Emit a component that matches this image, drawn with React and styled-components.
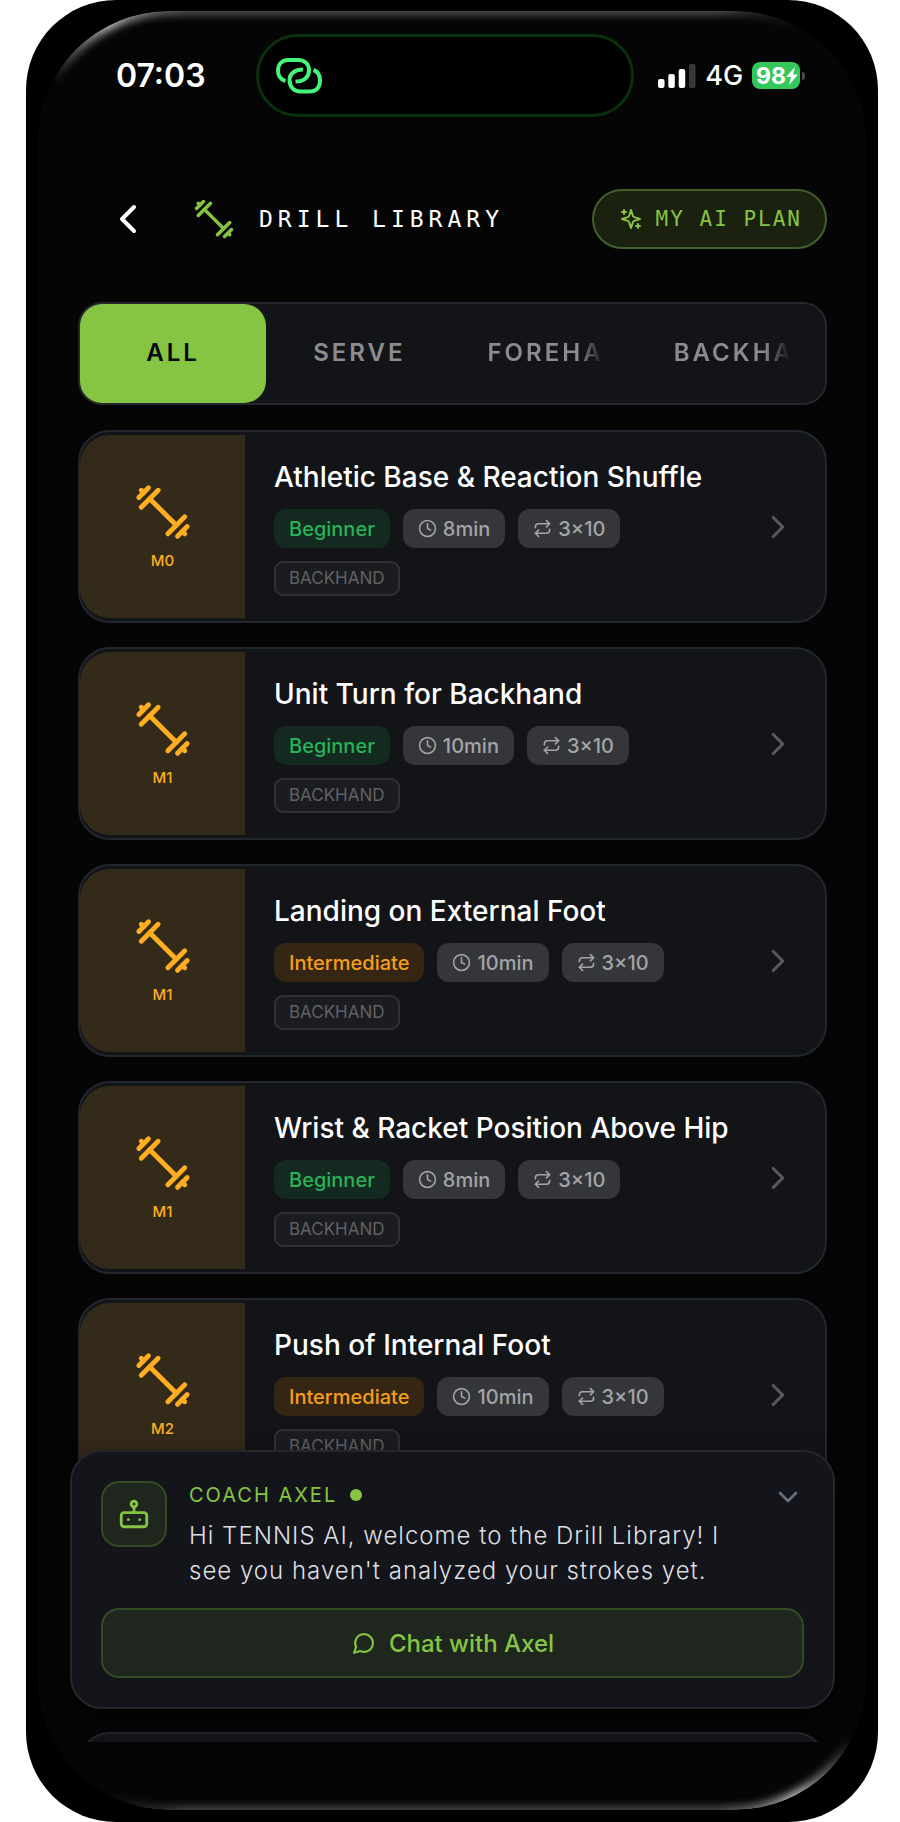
import React, { useState } from 'react';
import styled, { createGlobalStyle, css } from 'styled-components';

const GlobalStyle = createGlobalStyle`
  *, *:before, *:after {
    box-sizing: border-box;
  }

  body {
    background: #fff;
    font-family: Inter, "Liberation Sans", sans-serif;
    margin: 0;
  }

  button {
    background: none;
    border: 0;
    color: inherit;
    cursor: pointer;
    font: inherit;
    padding: 0;
  }

  h1, h2, p, ul {
    margin: 0;
    padding: 0;
  }
`;

const Phone = styled.div`
  background: #000;
  border-radius: 90px;
  height: 100vh;
  margin: 0 22px 0 26px;
  min-height: 900px;
  overflow: hidden;
  padding: 11px 12px 12px;
`;

const Screen = styled.div`
  background: #050505;
  border-radius: 130px;
  display: flex;
  flex-direction: column;
  height: 100%;
  overflow: hidden;
  padding: 23px 39px 68px 40px;
  position: relative;
`;

/* light that runs along the bezel */
const Glare = styled.div`
  border-radius: inherit;
  box-shadow: inset 0 5px 8px -1px rgba(255, 255, 255, .3), inset 0 -5px 8px -1px rgba(255, 255, 255, .26);
  inset: 0;
  mask-image: linear-gradient(to right, transparent 70px, #000 150px, #000 calc(100% - 150px), transparent calc(100% - 70px));
  pointer-events: none;
  position: absolute;
`;

const CornerGlare = styled.div`
  border-radius: inherit;
  box-shadow: ${props => (props.$bottom
    ? 'inset -3px -4px 8px 0 rgba(255, 255, 255, .7)'
    : 'inset 3px 4px 8px 0 rgba(255, 255, 255, .7)')};
  inset: 0;
  mask-image: radial-gradient(circle 80px at ${props => (props.$bottom
    ? 'calc(100% - 72px) calc(100% - 15px)'
    : '72px 15px')}, #000, transparent);
  pointer-events: none;
  position: absolute;
`;

const StatusBar = styled.div`
  align-items: center;
  color: #fff;
  display: grid;
  grid-template-columns: 140px 1fr auto;
  margin: 0 22px 0 38px;
`;

const Time = styled.span`
  font-size: 32px;
  font-weight: 600;
`;

const Island = styled.div`
  align-items: center;
  background: #000;
  border: 3px solid #0a300c;
  border-radius: 42px;
  display: flex;
  height: 83px;
  margin-right: 24px;
  padding-left: 17px;
`;

const Signals = styled.div`
  align-items: center;
  display: flex;
  font-size: 27px;
  font-weight: 500;
  gap: 9px;
`;

const Battery = styled.span`
  align-items: center;
  background: #34c759;
  border-radius: 8px;
  display: flex;
  font-size: 23px;
  font-weight: 700;
  height: 27px;
  margin-right: 5px;
  padding: 0 2px 0 4px;
  position: relative;

  &:after {
    background: #48484a;
    border-radius: 0 3px 3px 0;
    content: '';
    height: 8px;
    position: absolute;
    right: -5px;
    width: 3px;
  }
`;

const Header = styled.header`
  align-items: center;
  color: #86c543;
  display: flex;
  margin-top: 72px;
  padding-left: 26px;
`;

const BackButton = styled.button`
  color: #fff;
  display: flex;
  margin-right: 41px;
`;

const PageTitle = styled.h1`
  color: #fff;
  flex: 1;
  font-family: "DejaVu Sans Mono", "Liberation Mono", monospace;
  font-size: 23px;
  font-weight: 400;
  letter-spacing: 5px;
  margin-left: 24px;
  white-space: nowrap;
`;

const PlanButton = styled.button`
  align-items: center;
  background: #1a210f;
  border: 2px solid #42602a;
  border-radius: 30px;
  color: #86c543;
  display: flex;
  font-family: "DejaVu Sans Mono", "Liberation Mono", monospace;
  font-size: 21px;
  gap: 13px;
  height: 60px;
  letter-spacing: 2px;
  padding: 0 23px 0 25px;
  white-space: nowrap;
`;

const Tabs = styled.div`
  background: #131418;
  border: 2px solid #24272e;
  border-radius: 24px;
  display: grid;
  grid-template-columns: repeat(4, 1fr);
  margin-top: 53px;
`;

const Tab = styled.button`
  border-radius: 22px;
  color: #8b8c90;
  font-size: 24px;
  font-weight: 600;
  height: 99px;
  letter-spacing: 3px;
  min-width: 0;
  padding: 0 35px 2px;

  span {
    display: block;
    overflow: hidden;
    white-space: nowrap;
  }

  ${props => props.$active && css`
    background: #86c543;
    color: #050505;
  `}

  ${props => props.$faded && css`
    span {
      mask-image: linear-gradient(to right, #000 calc(100% - 26px), transparent);
    }
  `}
`;

const Content = styled.main`
  display: flex;
  flex: 1;
  flex-direction: column;
  margin-top: 25px;
  min-height: 0;
  position: relative;
`;

const DrillList = styled.ul`
  display: flex;
  flex: 1;
  flex-direction: column;
  gap: 24px;
  list-style: none;
  min-height: 0;
  overflow: hidden;
`;

const Card = styled.li`
  background: #131418;
  border: 2px solid #22262d;
  border-radius: 32px;
  flex-shrink: 0;
  min-height: 193px;
`;

const CardButton = styled.button`
  align-items: center;
  display: flex;
  padding: 3px 28px 3px 0;
  text-align: left;
  width: 100%;
`;

const Thumb = styled.div`
  align-items: center;
  background: #342a1a;
  border-radius: 30px 0 0 30px;
  color: #ffae23;
  display: flex;
  flex-direction: column;
  font-size: 15px;
  font-weight: 500;
  gap: 10px;
  justify-content: center;
  line-height: 20px;
  min-height: 183px;
  width: 165px;
`;

const CardDetails = styled.div`
  flex: 1;
  padding: 3px 20px 0 29px;
`;

const DrillName = styled.h2`
  color: #fff;
  font-size: 28px;
  font-weight: 500;
  line-height: 34px;
  margin-bottom: 15px;
`;

const Badges = styled.div`
  display: flex;
  flex-wrap: wrap;
  gap: 13px;
`;

const badgeColors = {
  Beginner: css`
    background: #14291f;
    color: #27b358;
  `,
  Intermediate: css`
    background: #352614;
    color: #f59e1b;
  `,
  plain: css`
    background: #35363a;
    color: #a3a4a7;
  `
};

const Badge = styled.span`
  align-items: center;
  border-radius: 12px;
  display: flex;
  font-size: 20px;
  font-weight: 500;
  gap: 6px;
  height: 39px;
  padding: 0 15px;
  ${props => badgeColors[props.$kind]}
`;

const StrokeTag = styled.span`
  background: #1b1c20;
  border: 2px solid #303136;
  border-radius: 9px;
  color: #606165;
  font-size: 17px;
  line-height: 31px;
  padding: 0 13px;
`;

const NextArrow = styled.span`
  color: #58595d;
`;

const CoachPanel = styled.section`
  background: #14151b;
  border: 2px solid #25272d;
  border-radius: 32px;
  bottom: 33px;
  box-shadow: 0 8px 24px rgba(0, 0, 0, .5);
  left: -8px;
  padding: 29px;
  position: absolute;
  right: -8px;
`;

const CoachTop = styled.div`
  align-items: flex-start;
  display: flex;
`;

const Avatar = styled.div`
  align-items: center;
  background: #1f261e;
  border: 2px solid #344a24;
  border-radius: 18px;
  color: #86c543;
  display: flex;
  height: 66px;
  justify-content: center;
  width: 66px;
`;

const CoachText = styled.div`
  flex: 1;
  padding: 0 28px 0 22px;
`;

const CoachName = styled.h2`
  align-items: center;
  color: #86c543;
  display: flex;
  font-size: 20px;
  font-weight: 400;
  gap: 13px;
  letter-spacing: 2px;
  line-height: 28px;

  &:after {
    background: #86c543;
    border-radius: 50%;
    content: '';
    height: 12px;
    width: 12px;
  }
`;

const Message = styled.p`
  color: #dedfe1;
  font-size: 24px;
  font-weight: 300;
  letter-spacing: 1px;
  line-height: 35px;
  margin-top: 9px;
`;

const CollapseButton = styled.button`
  color: #6b7080;
  display: flex;
`;

const ChatButton = styled.button`
  align-items: center;
  background: #1f261e;
  border: 2px solid #344a24;
  border-radius: 18px;
  color: #86c543;
  display: flex;
  font-size: 24px;
  font-weight: 500;
  gap: 13px;
  height: 70px;
  justify-content: center;
  margin-top: 20px;
  width: 100%;
`;

const Svg = styled.svg.attrs(props => ({
  'aria-hidden': true,
  fill: 'none',
  height: props.$size,
  stroke: 'currentColor',
  strokeLinecap: 'round',
  strokeLinejoin: 'round',
  strokeWidth: 2,
  viewBox: '0 0 24 24',
  width: props.$size
}))`
  display: block;
  flex-shrink: 0;
`;

const icons = {
  back: ['m15 18-6-6 6-6'],
  bot: ['M5 11h14a2 2 0 0 1 2 2v6a2 2 0 0 1-2 2H5a2 2 0 0 1-2-2v-6a2 2 0 0 1 2-2z', 'M14 5a2 2 0 1 1-4 0 2 2 0 0 1 4 0z', 'M12 7v4', 'M8 16h.01', 'M16 16h.01'],
  chat: ['m3 21 1.9-5.7a8.5 8.5 0 1 1 3.8 3.8z'],
  clock: ['M22 12a10 10 0 1 1-20 0 10 10 0 0 1 20 0z', 'M12 6v6l4 2'],
  down: ['m6 9 6 6 6-6'],
  dumbbell: ['m6.5 6.5 11 11', 'm21 21-1-1', 'm3 3 1 1', 'm18 22 4-4', 'm2 6 4-4', 'm3 10 7-7', 'm14 21 7-7'],
  next: ['m9 18 6-6-6-6'],
  repeat: ['m17 2 4 4-4 4', 'M3 11v-1a4 4 0 0 1 4-4h14', 'm7 22-4-4 4-4', 'M21 13v1a4 4 0 0 1-4 4H3'],
  sparkles: ['m12 3-1.9 5.8a2 2 0 0 1-1.3 1.3L3 12l5.8 1.9a2 2 0 0 1 1.3 1.3L12 21l1.9-5.8a2 2 0 0 1 1.3-1.3L21 12l-5.8-1.9a2 2 0 0 1-1.3-1.3L12 3z', 'M5 3v4', 'M19 17v4', 'M3 5h4', 'M17 19h4']
};

function Icon({ name, size }) {
  return (
    <Svg $size={size}>
      {icons[name].map(d => <path key={d} d={d} />)}
    </Svg>
  );
}

function HotspotIcon() {
  return (
    <svg width="46" height="36" viewBox="0 0 46 36" fill="none" stroke="#45f57b" strokeWidth="4" aria-hidden="true">
      <path d="M9.5 23C4.5 21.5 2 17.5 2 12.5 2 6 6 2 12.5 2H22c7 0 11 4.5 11 10.5 0 6.5-5 11-13.5 11" />
      <path d="M27 11.5c-8 0-13.5 4-13.5 10.5 0 7 4.5 11.5 11 11.5H34c6.5 0 10-4.5 10-11 0-5-2-9-6.5-10.5" />
    </svg>
  );
}

function SignalIcon() {
  return (
    <svg width="38" height="24" viewBox="0 0 38 24" fill="#fff" aria-hidden="true">
      <rect x="0" y="15" width="6.5" height="9" rx="2" />
      <rect x="10.3" y="10" width="6.5" height="14" rx="2" />
      <rect x="20.7" y="5" width="6.5" height="19" rx="2" />
      <rect x="31" y="0" width="6.5" height="24" rx="2" fill="#38383a" />
    </svg>
  );
}

function BoltIcon() {
  return (
    <svg width="12" height="18" viewBox="0 0 12 18" fill="#fff" aria-hidden="true">
      <path d="M9 0 0 10h5l-2 8 9-10.5H7z" />
    </svg>
  );
}

const drills = [
  { name: 'Athletic Base & Reaction Shuffle', module: 'M0', level: 'Beginner', minutes: 8 },
  { name: 'Unit Turn for Backhand', module: 'M1', level: 'Beginner', minutes: 10 },
  { name: 'Landing on External Foot', module: 'M1', level: 'Intermediate', minutes: 10 },
  { name: 'Wrist & Racket Position Above Hip', module: 'M1', level: 'Beginner', minutes: 8 },
  { name: 'Push of Internal Foot', module: 'M2', level: 'Intermediate', minutes: 10 }
];

const tabs = [
  { label: 'ALL' },
  { label: 'SERVE' },
  { label: 'FOREHAND', faded: true },
  { label: 'BACKHAND', faded: true }
];

function DrillCard({ name, module, level, minutes }) {
  return (
    <Card>
      <CardButton>
        <Thumb>
          <Icon name="dumbbell" size={58} />
          {module}
        </Thumb>
        <CardDetails>
          <DrillName>{name}</DrillName>
          <Badges>
            <Badge $kind={level}>{level}</Badge>
            <Badge $kind="plain"><Icon name="clock" size={19} />{minutes}min</Badge>
            <Badge $kind="plain"><Icon name="repeat" size={19} />3×10</Badge>
            <StrokeTag>BACKHAND</StrokeTag>
          </Badges>
        </CardDetails>
        <NextArrow><Icon name="next" size={38} /></NextArrow>
      </CardButton>
    </Card>
  );
}

function App() {
  const [active, setActive] = useState('ALL');

  return (
    <Phone>
      <GlobalStyle />
      <Screen>
        <StatusBar>
          <Time>07:03</Time>
          <Island><HotspotIcon /></Island>
          <Signals>
            <SignalIcon />
            4G
            <Battery>98<BoltIcon /></Battery>
          </Signals>
        </StatusBar>
        <Header>
          <BackButton aria-label="Back"><Icon name="back" size={48} /></BackButton>
          <Icon name="dumbbell" size={42} />
          <PageTitle>DRILL LIBRARY</PageTitle>
          <PlanButton><Icon name="sparkles" size={24} />MY AI PLAN</PlanButton>
        </Header>
        <Tabs>
          {tabs.map(({ label, faded }) => (
            <Tab key={label} $active={active === label} $faded={faded} onClick={() => setActive(label)}>
              <span>{label}</span>
            </Tab>
          ))}
        </Tabs>
        <Content>
          <DrillList>
            {drills.map(drill => <DrillCard key={drill.name} {...drill} />)}
            <Card />
            <Card />
          </DrillList>
          <CoachPanel>
            <CoachTop>
              <Avatar><Icon name="bot" size={34} /></Avatar>
              <CoachText>
                <CoachName>COACH AXEL</CoachName>
                <Message>Hi TENNIS AI, welcome to the Drill Library! I see you haven't analyzed your strokes yet.</Message>
              </CoachText>
              <CollapseButton aria-label="Collapse"><Icon name="down" size={32} /></CollapseButton>
            </CoachTop>
            <ChatButton><Icon name="chat" size={25} />Chat with Axel</ChatButton>
          </CoachPanel>
        </Content>
        <Glare />
        <CornerGlare />
        <CornerGlare $bottom />
      </Screen>
    </Phone>
  );
}

export default App;
